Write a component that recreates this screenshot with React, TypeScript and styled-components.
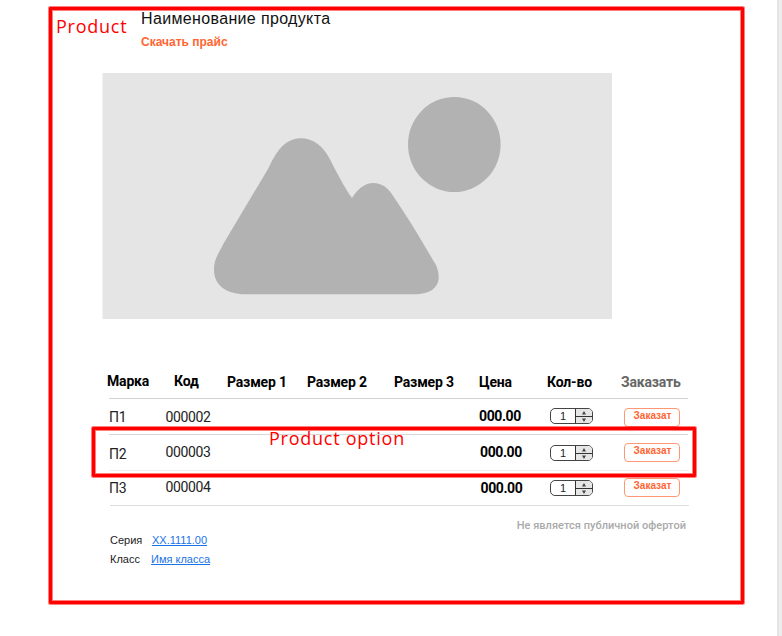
import React from 'react';
import styled, { createGlobalStyle } from 'styled-components';

const GlobalStyle = createGlobalStyle`
  * { box-sizing: border-box; }
  body { margin: 0; background: #fff; font-family: "Liberation Sans", Arial, sans-serif; }
`;

const Page = styled.div`
  display: flex;
  width: 782px;
  height: 636px;
  overflow: hidden;
`;

const Sheet = styled.main`
  flex: 1;
  padding: 7px 0 0 49px;
`;

const Gutter = styled.div`
  width: 5px;
  background: #eeeeee;
  border-left: 2px solid #e4e4e4;
`;

const ProductFrame = styled.section`
  position: relative;
  width: 695px;
  height: 597px;
  border: 3px solid #ff0000;
  border-radius: 1px;
  box-shadow: 0 0 0 1px rgba(255, 0, 0, 0.5), inset 0 0 0 1px rgba(255, 0, 0, 0.5);
`;

const Header = styled.header`
  display: flex;
  height: 63px;
`;

const Note = styled.span`
  font: 400 18px/24px "Open Sans", sans-serif;
  letter-spacing: 0.75px;
  color: #ff0000;
  white-space: nowrap;
`;

const ProductNote = styled.div`
  width: 89px;
  padding: 4px 0 0 4px;
`;

const Heading = styled.div`
  display: flex;
  flex-direction: column;
  align-items: flex-start;
`;

const Title = styled.h1`
  margin: 0;
  font-size: 16px;
  line-height: 18px;
  font-weight: 400;
  letter-spacing: 0.35px;
  color: #111;
  white-space: nowrap;
`;

const PriceLink = styled.a`
  margin-top: 7px;
  font-size: 12px;
  line-height: 14px;
  font-weight: 700;
  color: #ff6633;
  white-space: nowrap;
`;

const Picture = styled.svg`
  display: block;
  margin-left: 50px;
`;

const Table = styled.div`
  position: relative;
  width: 590px;
  margin: 45px 0 0 54px;
`;

const Row = styled.div<{ $height: number; $line: string; $inset?: number }>`
  display: grid;
  grid-template-columns: 68px 53px 79px 88px 85px 68px 74px 75px;
  height: ${p => p.$height}px;
  background: linear-gradient(${p => p.$line}, ${p => p.$line}) ${p => p.$inset ?? 3}px 100% / 579px 1px no-repeat;
`;

const OptionRow = styled(Row)`
  grid-template-columns: 59px 62px 79px 88px 85px 68px 74px 75px;
`;

const Cell = styled.div<{ $top?: number; $left?: number }>`
  padding: ${p => p.$top ?? 0}px 0 0 ${p => p.$left ?? 0}px;
  font-size: 14px;
  line-height: 16px;
  color: #222;
  white-space: nowrap;
`;

const HeadCell = styled(Cell)<{ $muted?: boolean }>`
  font: 700 14px/16px Roboto, sans-serif;
  letter-spacing: -0.17px;
  color: ${p => (p.$muted ? '#666' : '#000')};
`;

const CodeCell = styled(Cell)`
  font-family: Roboto, sans-serif;
  letter-spacing: -0.35px;
`;

const MarkCell = styled(Cell)`
  font-family: Roboto, sans-serif;
  letter-spacing: -0.35px;
`;

const PriceCell = styled(Cell)`
  font: 700 14px/16px Roboto, sans-serif;
  letter-spacing: -0.4px;
  color: #000;
`;

const Stepper = styled.div`
  display: flex;
  width: 43px;
  height: 16px;
  border: 1px solid #444;
  border-radius: 5px;
  overflow: hidden;
  background: #fff;
`;

const Quantity = styled.span`
  width: 24px;
  font-size: 11px;
  line-height: 14px;
  text-align: center;
  color: #222;
`;

const StepButtons = styled.svg`
  display: block;
  flex: none;
`;

const OrderButton = styled.button`
  display: block;
  width: 56px;
  height: 19px;
  padding: 0 0 4px 1px;
  border: 1px solid #ff9775;
  border-radius: 4px;
  background: #fff;
  color: #ff6633;
  font: 700 10px/12px "Liberation Sans", sans-serif;
  text-align: center;
`;

const OptionFrame = styled.div`
  position: absolute;
  left: -14px;
  top: 63px;
  width: 604px;
  height: 50px;
  border: 3px solid #ff0000;
  border-radius: 1px;
  box-shadow: 0 0 0 1px rgba(255, 0, 0, 0.5), inset 0 0 0 1px rgba(255, 0, 0, 0.5);
`;

const OptionNote = styled.div`
  padding: 0 0 0 174px;
  margin-top: -4px;
`;

const Offer = styled.p`
  margin: 13px 55px 0 0;
  font: 500 11px/14px Roboto, sans-serif;
  letter-spacing: 0.03px;
  text-align: right;
  color: #aaa;
`;

const Details = styled.dl`
  display: grid;
  grid-template-columns: 41px auto;
  margin: -2px 0 0 58px;
  font-size: 11px;
  line-height: 19px;
`;

const Term = styled.dt`
  color: #222;
`;

const Value = styled.dd<{ $shift?: number }>`
  margin: 0 0 0 ${p => p.$shift ?? 0}px;
`;

const ValueLink = styled.a`
  color: #1a73e8;
  text-decoration: underline;
`;

const headings = [
  { text: 'Марка', top: 0, left: 1 },
  { text: 'Код', top: 0, left: 0 },
  { text: 'Размер 1', top: 1, left: 0 },
  { text: 'Размер 2', top: 1, left: 1 },
  { text: 'Размер 3', top: 1, left: 0 },
  { text: 'Цена', top: 1, left: 0 },
  { text: 'Кол-во', top: 1, left: 0 },
  { text: 'Заказать', top: 1, left: 0, muted: true },
];

const options = [
  { mark: 'П1', code: '000002', height: 36, line: '#d8d8d8', inset: 3, markTop: 10, codeTop: 10, priceTop: 9, priceLeft: 0, stepTop: 9, orderTop: 9 },
  { mark: 'П2', code: '000003', height: 36, line: '#eeeeee', inset: 4, markTop: 11, codeTop: 9, priceTop: 9, priceLeft: 1, stepTop: 10, orderTop: 8 },
  { mark: 'П3', code: '000004', height: 35, line: '#dddddd', inset: 4, markTop: 9, codeTop: 8, priceTop: 9, priceLeft: 1.5, stepTop: 9, orderTop: 7 },
];

function QuantityStepper() {
  return (
    <Stepper>
      <Quantity>1</Quantity>
      <StepButtons width="17" height="14" viewBox="0 0 17 14">
        <path d="M0 0H17V14H0Z" fill="#e6e6e6" />
        <path d="M.5 0V14M0 7.5H17" stroke="#333" fill="none" />
        <path d="M9 2L11 5.500H7ZM7 9.500H11L9 13Z" fill="#444" />
      </StepButtons>
    </Stepper>
  );
}

export default function App() {
  return (
    <Page>
      <GlobalStyle />
      <Sheet>
        <ProductFrame>
          <Header>
            <ProductNote><Note>Product</Note></ProductNote>
            <Heading>
              <Title>Наименование продукта</Title>
              <PriceLink>Скачать прайс</PriceLink>
            </Heading>
          </Header>
          <Picture width="510" height="246" viewBox="102 73 510 246">
            <path d="M102.500 73H612V319H102.500Z" fill="#e5e5e5" />
            <ellipse cx="454.3" cy="144.5" rx="46.3" ry="47.5" fill="#b2b2b2" />
            <path d="M301 138.300C313 138.300 323 146 329.500 158.500C336 171 344 187 352 198C357 190 364 183 373.300 183C382 183 388 188 392 194.300C400 206 409 220 416.200 231.700L434 261.700C436.500 265 438.700 271 438.700 277C438.700 289 428 294.300 414 294.300H245.500C226 294.300 214 285 214 270C214 263 215.500 258.500 218.500 253.300C221 248 224.500 242 228.600 235L268 169C270 165 272 160.500 274.200 157C281 145 290 138.300 301 138.300Z" fill="#b2b2b2" />
          </Picture>
          <Table>
            <Row $height={35} $line="#d2d2d2">
              {headings.map(h => (
                <HeadCell key={h.text} $top={9 + h.top} $left={h.left} $muted={h.muted}>{h.text}</HeadCell>
              ))}
            </Row>
            {options.map(o => (
              <OptionRow key={o.mark} $height={o.height} $line={o.line} $inset={o.inset}>
                <MarkCell $top={o.markTop} $left={3}>{o.mark}</MarkCell>
                <CodeCell $top={o.codeTop} $left={0.5}>{o.code}</CodeCell>
                <Cell /><Cell /><Cell />
                <PriceCell $top={o.priceTop} $left={o.priceLeft}>000.00</PriceCell>
                <Cell $top={o.stepTop} $left={3}><QuantityStepper /></Cell>
                <Cell $top={o.orderTop} $left={3}><OrderButton>Заказат</OrderButton></Cell>
              </OptionRow>
            ))}
            <OptionFrame>
              <OptionNote><Note>Product option</Note></OptionNote>
            </OptionFrame>
          </Table>
          <Offer>Не является публичной офертой</Offer>
          <Details>
            <Term>Серия</Term>
            <Value $shift={1}><ValueLink>XX.1111.00</ValueLink></Value>
            <Term>Класс</Term>
            <Value><ValueLink>Имя класса</ValueLink></Value>
          </Details>
        </ProductFrame>
      </Sheet>
      <Gutter />
    </Page>
  );
}
